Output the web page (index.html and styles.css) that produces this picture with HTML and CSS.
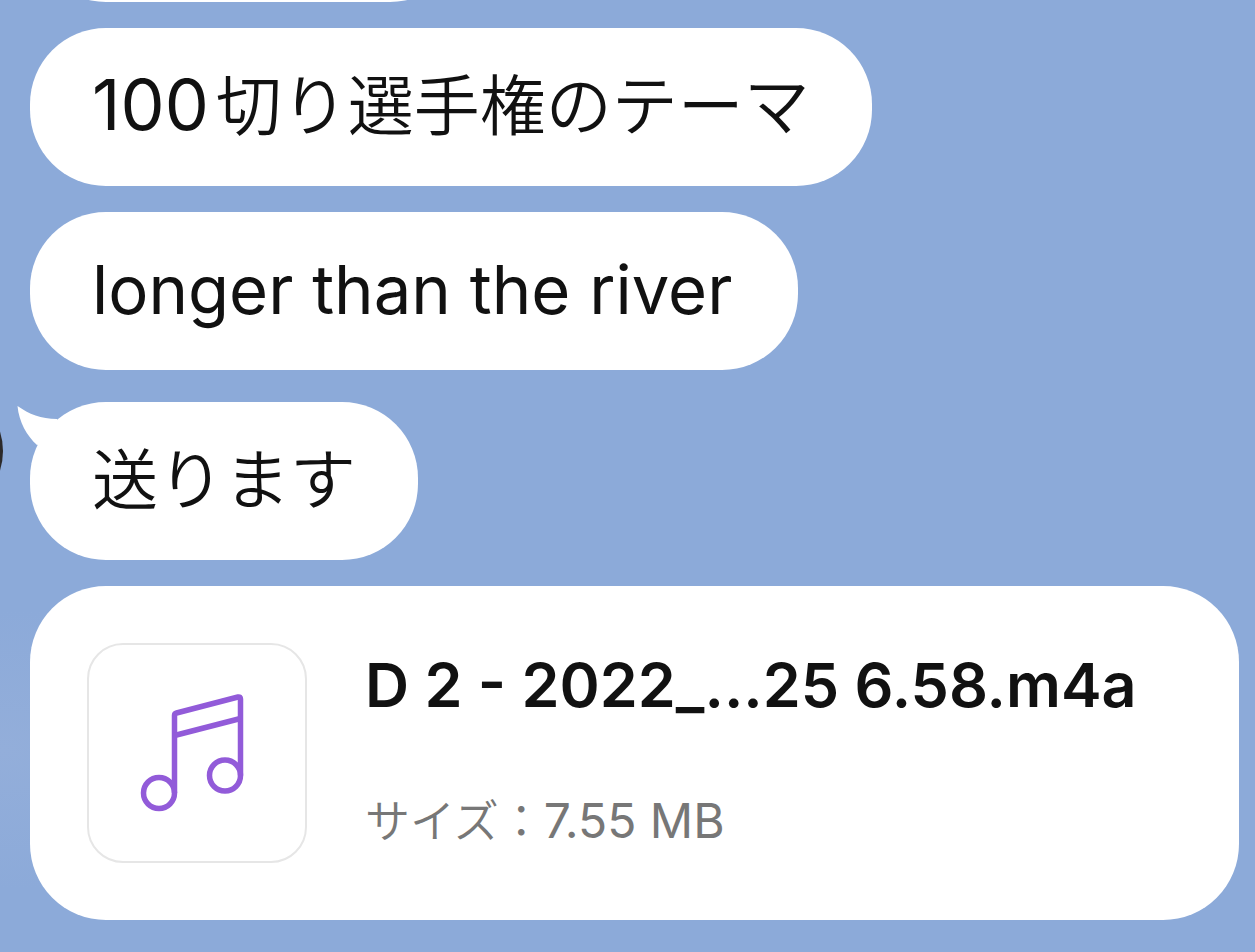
FILE: index.html
```
<!DOCTYPE html>
<html lang="ja">
<head>
  <meta charset="UTF-8" />
  <meta name="viewport" content="width=device-width, initial-scale=1.0"/>
  <title>Chat</title>
  <link rel="stylesheet" href="styles.css">
</head>
<body>
  <main class="chat">
    <div class="group">
      <div class="bubble bubble-previous"></div>
      <div class="bubble"><span class="number">100</span>切り選手権のテーマ</div>
      <div class="bubble bubble-latin">longer than the river</div>
    </div>
    <div class="group">
      <div class="avatar"></div>
      <div class="bubble">
        <svg class="tail" viewBox="0 0 48 44" aria-hidden="true">
          <path d="M0.500 0 C12 8 24 13 40 13 L48 30 L20 39 C10 30 2 16 0.500 0Z" fill="#fff"/>
        </svg>
        送ります
      </div>
      <a class="file-card" href="#">
        <span class="file-icon">
          <svg viewBox="0 0 216 216" aria-hidden="true">
            <g fill="none" stroke="#925bd9" stroke-width="5.500" stroke-linejoin="round">
              <circle cx="70" cy="148" r="15.500"/>
              <circle cx="136" cy="130.500" r="15.500"/>
              <path d="M85.500 148V70.500Q85.500 68.500 87.500 68L149 52Q151.500 51.500 151.500 54V130.500"/>
              <path d="M85.500 90.500L151.500 73.500"/>
            </g>
          </svg>
        </span>
        <span class="file-info">
          <span class="file-name">D 2 - 2022_...25 6.58.m4a</span>
          <span class="file-size">サイズ：<span class="file-size-value">7.55 MB</span></span>
        </span>
      </a>
    </div>
  </main>
</body>
</html>
```
FILE: styles.css
```
* {
  box-sizing: border-box;
}
body {
  margin: 0;
  background: #8caad9;
  font-family: Inter, "Noto Sans CJK JP", sans-serif;
  color: #111;
}
.chat {
  display: flex;
  flex-direction: column;
  justify-content: flex-end;
  gap: 32px;
  height: 100vh;
  padding: 0 16px 32px 30px;
  overflow: hidden;
  background: radial-gradient(ellipse 260px 140px at 0 750px, #93aeda, #8caad9);
}
.group {
  position: relative;
  display: flex;
  flex-direction: column;
  align-items: flex-start;
  flex-shrink: 0;
  gap: 26px;
}
.bubble {
  position: relative;
  min-height: 158px;
  padding: 30px 62px 32px;
  background: #fff;
  border-radius: 76px;
  font-size: 66px;
  font-weight: 350;
  line-height: 96px;
}
.bubble-previous {
  width: 436px;
}
.bubble-latin {
  padding-right: 66px;
  font-size: 67px;
  font-weight: 400;
}
.number {
  margin-right: 7px;
  font-size: 70px;
  font-weight: 400;
  line-height: 1;
}
.tail {
  position: absolute;
  top: 4px;
  left: -13px;
  width: 48px;
  height: 44px;
}
.avatar {
  position: absolute;
  top: -16px;
  left: -157px;
  width: 130px;
  height: 130px;
  border-radius: 50%;
  background: #2c2a2a;
}
.file-card {
  display: flex;
  align-items: center;
  align-self: stretch;
  gap: 58px;
  padding: 57px;
  background: #fff;
  border-radius: 76px;
  color: #111;
  text-decoration: none;
}
.file-icon {
  flex-shrink: 0;
  width: 220px;
  height: 220px;
  border: 2px solid #e6e6e6;
  border-radius: 36px;
}
.file-icon svg {
  display: block;
  width: 100%;
}
.file-info {
  display: flex;
  flex-direction: column;
  gap: 66px;
  padding-bottom: 10px;
  white-space: nowrap;
}
.file-name {
  font-size: 61px;
  font-weight: 600;
  line-height: 80px;
}
.file-size {
  font-size: 45px;
  font-weight: 350;
  line-height: 60px;
  color: #777;
}
.file-size-value {
  font-size: 48px;
  font-weight: 400;
}
```
